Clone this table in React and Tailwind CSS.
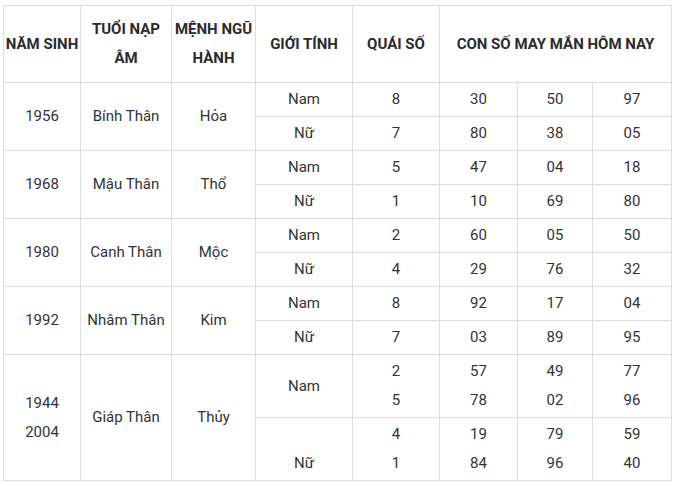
const rows = [
  {
    year: ["1956"],
    tuoi: "Bính Thân",
    menh: "Hỏa",
    sub: [
      { gt: ["Nam"], qs: ["8"], nums: [["30"], ["50"], ["97"]] },
      { gt: ["Nữ"], qs: ["7"], nums: [["80"], ["38"], ["05"]] },
    ],
  },
  {
    year: ["1968"],
    tuoi: "Mậu Thân",
    menh: "Thổ",
    sub: [
      { gt: ["Nam"], qs: ["5"], nums: [["47"], ["04"], ["18"]] },
      { gt: ["Nữ"], qs: ["1"], nums: [["10"], ["69"], ["80"]] },
    ],
  },
  {
    year: ["1980"],
    tuoi: "Canh Thân",
    menh: "Mộc",
    sub: [
      { gt: ["Nam"], qs: ["2"], nums: [["60"], ["05"], ["50"]] },
      { gt: ["Nữ"], qs: ["4"], nums: [["29"], ["76"], ["32"]] },
    ],
  },
  {
    year: ["1992"],
    tuoi: "Nhâm Thân",
    menh: "Kim",
    sub: [
      { gt: ["Nam"], qs: ["8"], nums: [["92"], ["17"], ["04"]] },
      { gt: ["Nữ"], qs: ["7"], nums: [["03"], ["89"], ["95"]] },
    ],
  },
  {
    year: ["1944", "2004"],
    tuoi: "Giáp Thân",
    menh: "Thủy",
    sub: [
      { gt: ["Nam"], qs: ["2", "5"], nums: [["57", "78"], ["49", "02"], ["77", "96"]] },
      { gt: ["", "Nữ"], qs: ["4", "1"], nums: [["19", "84"], ["79", "96"], ["59", "40"]] },
    ],
  },
];

const td = "border border-[#dddddd] px-0 py-0 text-center align-middle";

function Lines({ items }) {
  return items.map((t, i) => (
    <div key={i} className="h-[29px]">
      {t}
    </div>
  ));
}

export default function App() {
  return (
    <div className="bg-white w-[675px] h-[486px] pt-[5px] pl-[3px]">
      <table
        className="table-fixed border-collapse w-[668px] text-[15px] leading-[29px] text-[#333333]"
        style={{ fontFamily: "Roboto, 'Noto Sans', sans-serif" }}
      >
        <colgroup>
          <col className="w-[77px]" />
          <col className="w-[91px]" />
          <col className="w-[84px]" />
          <col className="w-[97px]" />
          <col className="w-[87px]" />
          <col className="w-[78px]" />
          <col className="w-[75px]" />
          <col className="w-[79px]" />
        </colgroup>
        <thead>
          <tr className="h-[77px] font-bold text-[#2b2b2b]">
            <th className={td}>NĂM SINH</th>
            <th className={td}>
              TUỔI NẠP
              <br />
              ÂM
            </th>
            <th className={td}>
              MỆNH NGŨ
              <br />
              HÀNH
            </th>
            <th className={td}>GIỚI TÍNH</th>
            <th className={td}>QUÁI SỐ</th>
            <th className={td} colSpan={3}>
              CON SỐ MAY MẮN HÔM NAY
            </th>
          </tr>
        </thead>
        <tbody>
          {rows.map((r) =>
            r.sub.map((s, i) => {
              const multi = s.qs.length > 1;
              return (
                <tr key={r.tuoi + i} className={multi ? "h-[63px]" : "h-[34px]"}>
                  {i === 0 && (
                    <>
                      <td className={td} rowSpan={2}>
                        <Lines items={r.year} />
                      </td>
                      <td className={td} rowSpan={2}>
                        {r.tuoi}
                      </td>
                      <td className={td} rowSpan={2}>
                        {r.menh}
                      </td>
                    </>
                  )}
                  <td className={td}>
                    <Lines items={s.gt} />
                  </td>
                  <td className={td}>
                    <Lines items={s.qs} />
                  </td>
                  {s.nums.map((n, j) => (
                    <td key={j} className={td}>
                      <Lines items={n} />
                    </td>
                  ))}
                </tr>
              );
            })
          )}
        </tbody>
      </table>
    </div>
  );
}
